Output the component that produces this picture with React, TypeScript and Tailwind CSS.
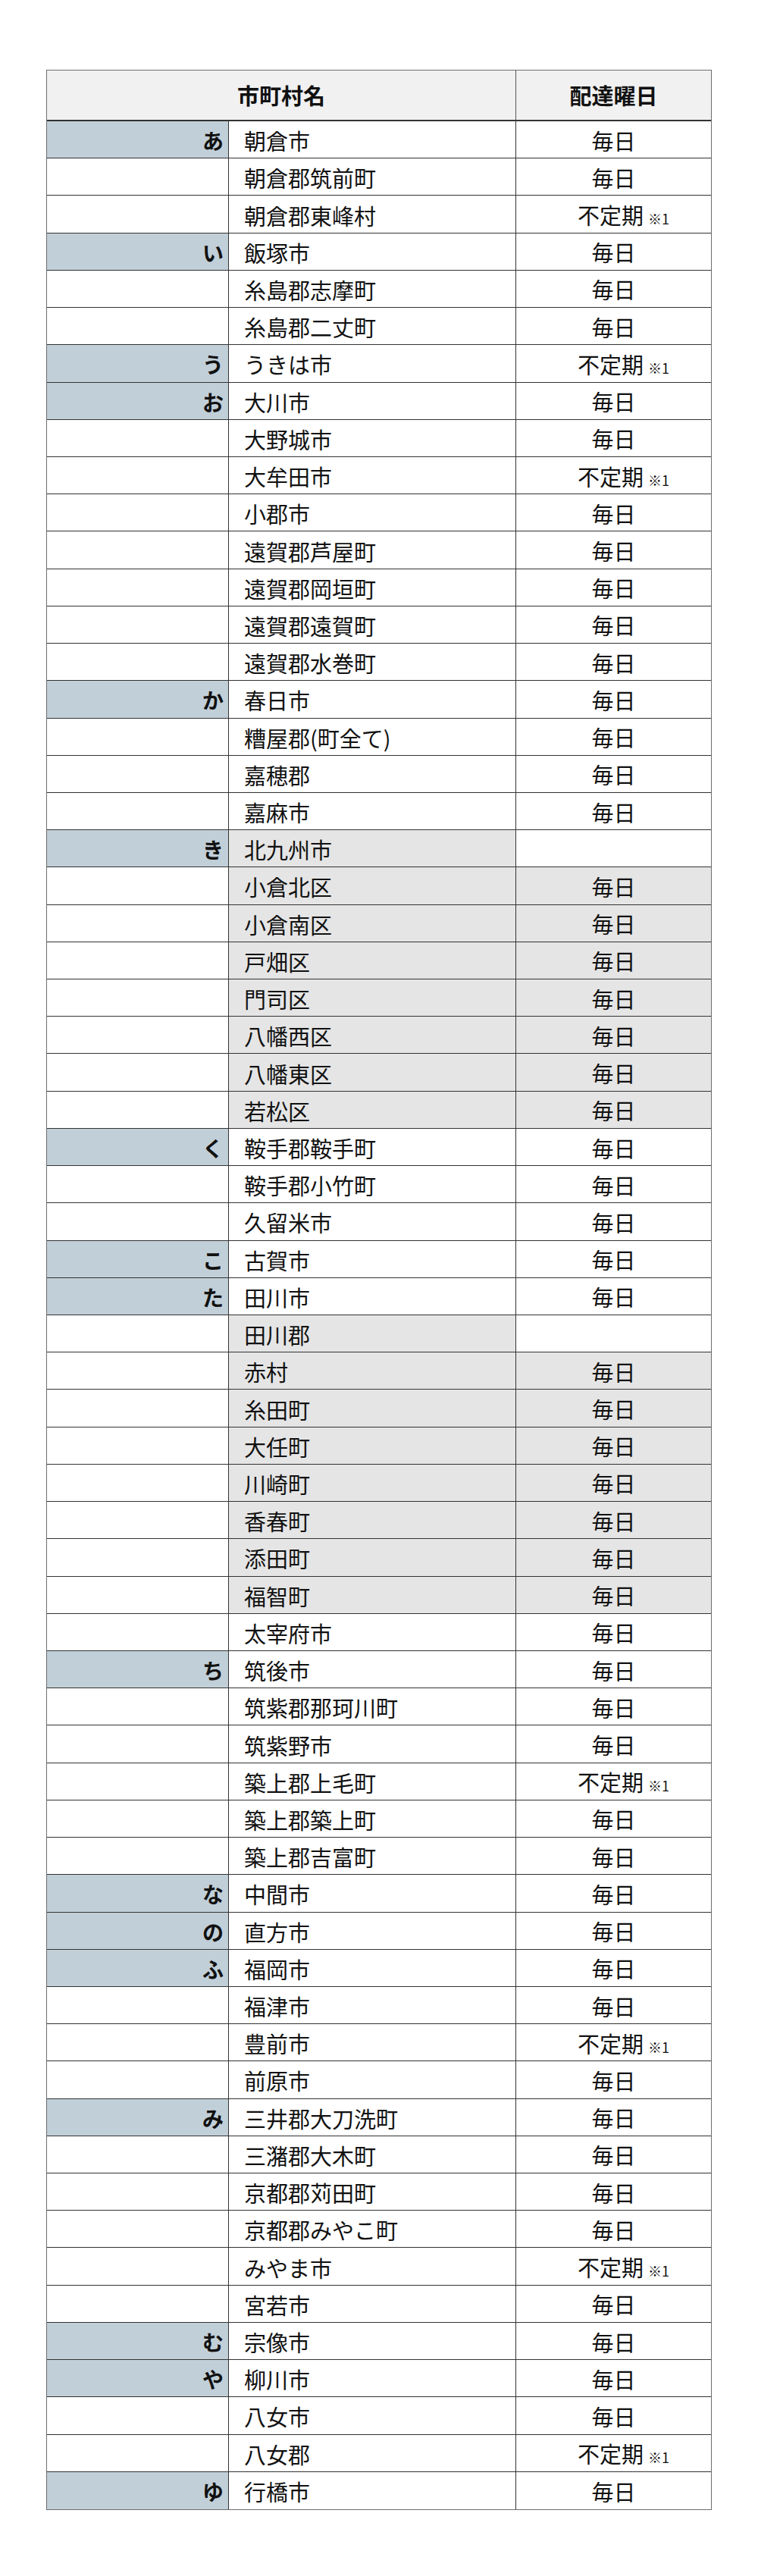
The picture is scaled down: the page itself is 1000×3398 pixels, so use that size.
import React from "react";

type Row = { k?: string; n: string; d: "m" | "i" | ""; g?: "n" | "b" };

const rows: Row[] = [
  { k: "あ", n: "朝倉市", d: "m" },
  { n: "朝倉郡筑前町", d: "m" },
  { n: "朝倉郡東峰村", d: "i" },
  { k: "い", n: "飯塚市", d: "m" },
  { n: "糸島郡志摩町", d: "m" },
  { n: "糸島郡二丈町", d: "m" },
  { k: "う", n: "うきは市", d: "i" },
  { k: "お", n: "大川市", d: "m" },
  { n: "大野城市", d: "m" },
  { n: "大牟田市", d: "i" },
  { n: "小郡市", d: "m" },
  { n: "遠賀郡芦屋町", d: "m" },
  { n: "遠賀郡岡垣町", d: "m" },
  { n: "遠賀郡遠賀町", d: "m" },
  { n: "遠賀郡水巻町", d: "m" },
  { k: "か", n: "春日市", d: "m" },
  { n: "糟屋郡(町全て)", d: "m" },
  { n: "嘉穂郡", d: "m" },
  { n: "嘉麻市", d: "m" },
  { k: "き", n: "北九州市", d: "", g: "n" },
  { n: "小倉北区", d: "m", g: "b" },
  { n: "小倉南区", d: "m", g: "b" },
  { n: "戸畑区", d: "m", g: "b" },
  { n: "門司区", d: "m", g: "b" },
  { n: "八幡西区", d: "m", g: "b" },
  { n: "八幡東区", d: "m", g: "b" },
  { n: "若松区", d: "m", g: "b" },
  { k: "く", n: "鞍手郡鞍手町", d: "m" },
  { n: "鞍手郡小竹町", d: "m" },
  { n: "久留米市", d: "m" },
  { k: "こ", n: "古賀市", d: "m" },
  { k: "た", n: "田川市", d: "m" },
  { n: "田川郡", d: "", g: "n" },
  { n: "赤村", d: "m", g: "b" },
  { n: "糸田町", d: "m", g: "b" },
  { n: "大任町", d: "m", g: "b" },
  { n: "川崎町", d: "m", g: "b" },
  { n: "香春町", d: "m", g: "b" },
  { n: "添田町", d: "m", g: "b" },
  { n: "福智町", d: "m", g: "b" },
  { n: "太宰府市", d: "m" },
  { k: "ち", n: "筑後市", d: "m" },
  { n: "筑紫郡那珂川町", d: "m" },
  { n: "筑紫野市", d: "m" },
  { n: "築上郡上毛町", d: "i" },
  { n: "築上郡築上町", d: "m" },
  { n: "築上郡吉富町", d: "m" },
  { k: "な", n: "中間市", d: "m" },
  { k: "の", n: "直方市", d: "m" },
  { k: "ふ", n: "福岡市", d: "m" },
  { n: "福津市", d: "m" },
  { n: "豊前市", d: "i" },
  { n: "前原市", d: "m" },
  { k: "み", n: "三井郡大刀洗町", d: "m" },
  { n: "三潴郡大木町", d: "m" },
  { n: "京都郡苅田町", d: "m" },
  { n: "京都郡みやこ町", d: "m" },
  { n: "みやま市", d: "i" },
  { n: "宮若市", d: "m" },
  { k: "む", n: "宗像市", d: "m" },
  { k: "や", n: "柳川市", d: "m" },
  { n: "八女市", d: "m" },
  { n: "八女郡", d: "i" },
  { k: "ゆ", n: "行橋市", d: "m" },
];

export default function App() {
  return (
    <div
      className="h-[3398px] bg-white pt-[92px] pl-[61px] text-[#111]"
      style={{ fontFamily: '"Noto Sans CJK JP", "Noto Sans", sans-serif' }}
    >
      <div className="w-[878px] border border-[#6e6e6e]">
        <div className="grid h-[67px] grid-cols-[619px_257px] border-b-2 border-[#333] bg-[#f1f1f1]">
          <div className="flex items-center justify-center border-r border-[#555] text-[29px] font-bold leading-none">
            市町村名
          </div>
          <div className="flex items-center justify-center text-[29px] font-bold leading-none">
            配達曜日
          </div>
        </div>
        {rows.map((r, i) => (
          <div
            key={i}
            className={
              "grid h-[49.22px] grid-cols-[240px_379px_257px] " +
              (i < rows.length - 1 ? "border-b border-[#333]" : "")
            }
          >
            <div
              className={
                "flex items-center justify-end border-r border-[#333] pr-[6px] pt-[2px] text-[28px] font-bold leading-none " +
                (r.k ? "bg-[#c1cfd8]" : "bg-white")
              }
            >
              {r.k ?? ""}
            </div>
            <div
              className={
                "flex items-center border-r border-[#333] pl-[20px] pt-[3px] text-[29px] leading-none " +
                (r.g ? "bg-[#e5e5e5]" : "bg-white")
              }
            >
              {r.n}
            </div>
            <div
              className={
                "flex items-center justify-center pt-[2px] text-[29px] leading-none " +
                (r.g === "b" ? "bg-[#e5e5e5]" : "bg-white")
              }
            >
              {r.d === "m" && <span>毎日</span>}
              {r.d === "i" && (
                <span className="flex items-baseline pl-[26px]">
                  <span>不定期</span>
                  <span className="ml-[6px] text-[18px]">※1</span>
                </span>
              )}
            </div>
          </div>
        ))}
      </div>
    </div>
  );
}
